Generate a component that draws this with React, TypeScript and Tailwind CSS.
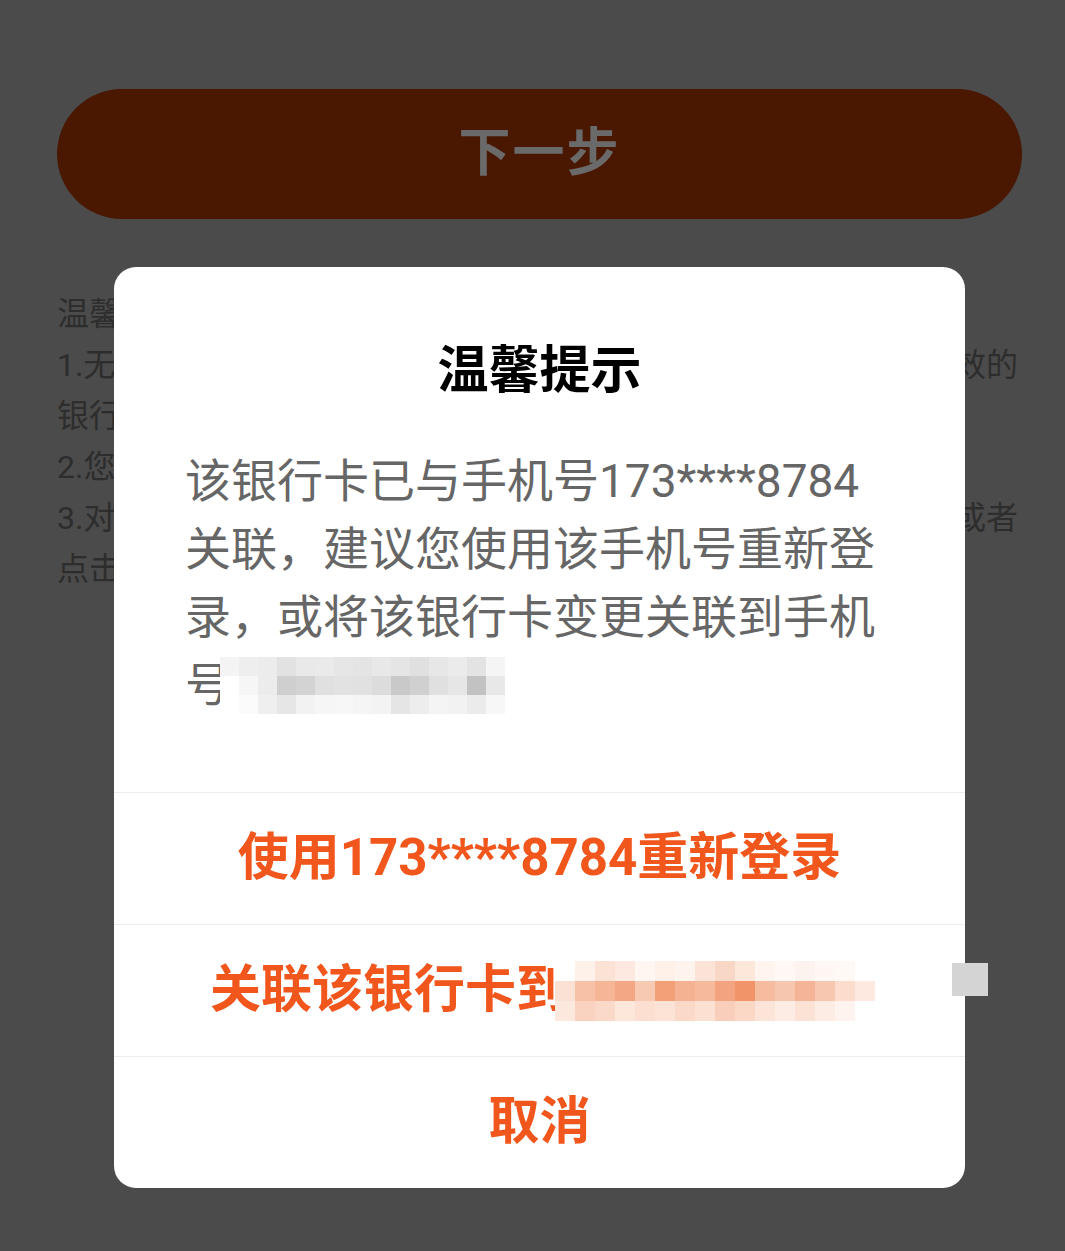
import React from "react";

const FONT = { fontFamily: "Roboto, 'Noto Sans CJK SC', sans-serif" };

// redaction mosaics, one colour per cell
const GRAY_MOSAIC = [
  ["#f4f4f4", "#eeeeee", "#ececec", "#e2e2e2", "#e9e9e9", "#eaeaea", "#e6e6e6", "#e4e4e4", "#e8e8e8", "#e5e5e5", "#e0e0e0", "#e7e7e7", "#ebebeb", "#e3e3e3", "#f5f5f5"],
  ["#ffffff", "#f6f6f6", "#ececec", "#cfcfcf", "#d3d3d3", "#e0e0e0", "#e2e2e2", "#e1e1e1", "#dcdcdc", "#c9c9c9", "#d0d0d0", "#e0e0e0", "#e6e6e6", "#c2c2c2", "#e8e8e8"],
  ["#ffffff", "#fbfbfb", "#efefef", "#e6e6e6", "#f2f2f2", "#f6f6f6", "#f7f7f7", "#f5f5f5", "#f3f3f3", "#e5e5e5", "#ededed", "#f4f4f4", "#f2f2f2", "#ebebeb", "#f7f7f7"],
];

const ORANGE_MOSAIC = [
  ["#ffffff", "#fdf1ea", "#fbe2d5", "#fde9df", "#fff6f1", "#fff0e8", "#fff3ed", "#fbe3d7", "#f9d7c6", "#fde6da", "#fff4ee", "#fff8f5", "#fdf3ee", "#fff7f3", "#fff9f6", "#ffffff"],
  ["#fbe1d4", "#f6c1a6", "#f5b596", "#f3a784", "#f8c9b2", "#f39f78", "#f5b293", "#f6b99c", "#f3a37f", "#f1946a", "#f6bca0", "#f7c6ae", "#f5b497", "#f8c7b0", "#fbdccd", "#fde9df"],
  ["#fde8de", "#fad3c0", "#fbd9c8", "#fde6da", "#fcdfd1", "#fde3d6", "#fbd9c9", "#fce1d3", "#f9cfbb", "#fbd7c6", "#fde4d8", "#fdece3", "#fce2d5", "#fdece4", "#fef3ee", "#ffffff"],
];

const Mosaic = ({ cells, size }: { cells: string[][]; size: number }) => (
  <div className="flex flex-col">
    {cells.map((row, r) => (
      <div key={r} className="flex">
        {row.map((c, i) => (
          <div key={i} style={{ width: size, height: size, background: c }} />
        ))}
      </div>
    ))}
  </div>
);

const BackgroundPage = () => (
  <div className="pl-[57px] pr-[43px] pt-[89px]">
    <button className="w-full h-[130px] rounded-full bg-[#4a1700] text-[52px] font-bold text-[#6a6a6a] flex items-center justify-center tracking-[2px]">
      下一步
    </button>

    <div className="mt-[70px] text-[32px] leading-[51px] text-[#2d2d2d] pr-[4px]">
      <p>温馨提示：</p>
      <p className="flex justify-between whitespace-nowrap">
        <span>1.无法添加银行卡时，请确认</span>
        <span>您输入的是本人名下有效的</span>
      </p>
      <p>银行卡。</p>
      <p>2.您绑定的银行卡需开通网上支付功能。</p>
      <p className="flex justify-between whitespace-nowrap">
        <span>3.对于绑卡遇到的问题，可拨打</span>
        <span>客服电话咨询或者</span>
      </p>
      <p>点击联系在线客服。</p>
    </div>
  </div>
);

const ActionRow = ({ children }: { children: React.ReactNode }) => (
  <button className="relative w-full h-[132px] border-t border-[#ededed] flex items-center justify-center text-[51px] font-bold text-[#f1561c]">
    {children}
  </button>
);

export default function App() {
  return (
    <div className="relative min-h-[1251px] bg-[#4b4b4b] overflow-hidden" style={FONT}>
      <BackgroundPage />

      {/* dialog */}
      <div className="absolute left-[114px] top-[267px] w-[851px] bg-white rounded-[22px]">
        <div className="pt-[72px] pb-[73px] px-[71px]">
          <h2 className="text-center text-[51px] leading-[64px] font-bold text-black">温馨提示</h2>
          <div className="mt-[44px] text-[46px] leading-[68px] text-[#666666]">
            <p>该银行卡已与手机号173****8784</p>
            <p>关联，建议您使用该手机号重新登</p>
            <p>录，或将该银行卡变更关联到手机</p>
            <p className="relative">
              号1**********。
              <span className="absolute left-[35px] top-[6px]">
                <Mosaic cells={GRAY_MOSAIC} size={19} />
              </span>
            </p>
          </div>
        </div>

        <ActionRow>使用173****8784重新登录</ActionRow>
        <ActionRow>
          <span className="w-full pl-[96px] text-left">关联该银行卡到1</span>
          <span className="absolute left-[441px] top-[36px]">
            <Mosaic cells={ORANGE_MOSAIC} size={20} />
          </span>
          <span className="absolute left-[838px] top-[38px] w-[36px] h-[33px] bg-[#d4d4d4]" />
        </ActionRow>
        <ActionRow>取消</ActionRow>
      </div>
    </div>
  );
}
